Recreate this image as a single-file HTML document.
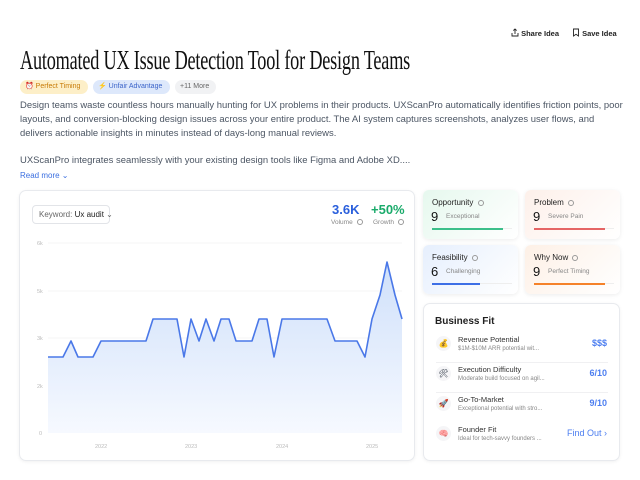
<!DOCTYPE html>
<html><head><meta charset="utf-8"><style>
*{margin:0;padding:0;box-sizing:border-box}
body{width:640px;height:480px;background:#fff;font-family:"Liberation Sans",sans-serif;color:#1f2937;position:relative;overflow:hidden}
.a{position:absolute;white-space:nowrap}
.title{left:20px;top:45px;font-family:"Liberation Serif",serif;font-size:27px;color:#111;transform:scaleX(0.675);transform-origin:left top;letter-spacing:-0.3px}
.tag{top:80px;height:14px;border-radius:7px;font-size:7px;line-height:14px;padding:0 5px;overflow:hidden}
.p{left:20px;font-size:9.45px;color:#4b5563;line-height:14px}
.card{position:absolute;border:1px solid #e8eaee;border-radius:7px;box-shadow:0 1px 3px rgba(0,0,0,.06)}
.mc{position:absolute;width:95px;height:49px;border-radius:6px;box-shadow:0 1px 4px rgba(0,0,0,.08)}
.mc .l{position:absolute;left:9px;top:8px;font-size:8px;color:#222}
.mc .n{position:absolute;left:8px;top:19px;font-size:13px;color:#111}
.mc .s{position:absolute;left:23px;top:23px;font-size:6.5px;color:#888}
.mc .bar{position:absolute;left:9px;top:38px;width:80px;height:1px;background:#eee}
.mc .bar i{display:block;height:2px;margin-top:-0.5px}
.q{display:inline-block;width:6px;height:6px;border:0.8px solid #999;border-radius:50%;vertical-align:middle;margin-left:2px}
.row .ic{position:absolute;left:12px;width:15px;height:15px;border-radius:50%;background:#f5f5f7;font-size:8px;text-align:center;line-height:15px}
.rt{position:absolute;left:34px;font-size:7.5px;color:#333}
.rs{position:absolute;left:34px;font-size:6px;color:#888}
.rv{position:absolute;right:12px;font-size:9px;color:#4c7ef0;font-weight:bold}
</style></head><body>
<div class="a" style="left:511px;top:28px;font-size:7.5px;font-weight:bold;color:#222">
<svg width="8" height="9" viewBox="0 0 8 9" style="vertical-align:-1px"><path d="M4 6V1M2.3 2.6L4 1l1.7 1.6M1 5v3h6V5" fill="none" stroke="#222" stroke-width="0.9"/></svg> Share Idea</div>
<div class="a" style="left:572px;top:28px;font-size:7.5px;font-weight:bold;color:#222">
<svg width="8" height="9" viewBox="0 0 8 9" style="vertical-align:-1px"><path d="M1.5 1h5v7L4 6.3 1.5 8z" fill="none" stroke="#222" stroke-width="0.9"/></svg> Save Idea</div>
<div class="a title">Automated UX Issue Detection Tool for Design Teams</div>
<div class="a tag" style="left:20px;width:68px;background:#fdefc8;color:#c77a06">⏰ Perfect Timing</div>
<div class="a tag" style="left:93px;width:77px;background:#dde8fb;color:#3b64c9">⚡ Unfair Advantage</div>
<div class="a tag" style="left:175px;width:41px;background:#f1f2f4;color:#666">+11 More</div>
<div class="a p" style="top:99px;white-space:normal;width:605px">Design teams waste countless hours manually hunting for UX problems in their products. UXScanPro automatically identifies friction points, poor layouts, and conversion-blocking design issues across your entire product. The AI system captures screenshots, analyzes user flows, and delivers actionable insights in minutes instead of days-long manual reviews.</div>
<div class="a p" style="top:154px">UXScanPro integrates seamlessly with your existing design tools like Figma and Adobe XD....</div>
<div class="a" style="left:20px;top:171px;font-size:8px;color:#3b6fe0">Read more ⌄</div>

<div class="card" style="left:19px;top:190px;width:396px;height:271px"></div>
<div class="a" style="left:32px;top:205px;width:78px;height:19px;border:1px solid #e2e4e8;border-radius:4px;font-size:8px;line-height:17px;padding-left:6px;color:#666">Keyword: <b style="color:#222;font-weight:normal">Ux audit</b> ⌄</div>
<div class="a" style="left:332px;top:202px;font-size:13px;font-weight:bold;color:#2a5fdc">3.6K</div>
<div class="a" style="left:371px;top:202px;font-size:13px;font-weight:bold;color:#1aab6b">+50%</div>
<div class="a" style="left:331px;top:219px;font-size:6.5px;color:#888">Volume <span class="q"></span></div>
<div class="a" style="left:373px;top:219px;font-size:6.5px;color:#888">Growth <span class="q"></span></div>
<svg class="a" style="left:0;top:0" width="640" height="480">
<defs><linearGradient id="g" x1="0" y1="0" x2="0" y2="1"><stop offset="0" stop-color="#cfe0fa"/><stop offset="1" stop-color="#f6f9ff"/></linearGradient></defs>
<g stroke="#f0f1f3" stroke-width="0.7"><line x1="48" y1="243" x2="402" y2="243"/><line x1="48" y1="291" x2="402" y2="291"/><line x1="48" y1="338" x2="402" y2="338"/><line x1="48" y1="386" x2="402" y2="386"/></g>
<g font-size="5.5" fill="#bbb" font-family="Liberation Sans"><text x="37" y="245">6k</text><text x="37" y="293">5k</text><text x="37" y="340">3k</text><text x="37" y="388">2k</text><text x="39" y="435">0</text>
<text x="95" y="448">2022</text><text x="185" y="448">2023</text><text x="276" y="448">2024</text><text x="366" y="448">2025</text></g>
<path d="M48 357L63 357L71 341L78 357L93 357L101 341L146 341L153 319L177 319L184 357L191 319L199 341L206 319L214 341L221 319L229 319L236 341L252 341L259 319L267 319L274 357L282 319L327 319L335 341L357 341L365 357L372 319L380 295L387 262L395 295L402 319L402 433L48 433Z" fill="url(#g)"/>
<path d="M48 357L63 357L71 341L78 357L93 357L101 341L146 341L153 319L177 319L184 357L191 319L199 341L206 319L214 341L221 319L229 319L236 341L252 341L259 319L267 319L274 357L282 319L327 319L335 341L357 341L365 357L372 319L380 295L387 262L395 295L402 319" fill="none" stroke="#4a78e8" stroke-width="1.6" stroke-linejoin="round"/>
</svg>

<div class="mc" style="left:423px;top:190px;background:linear-gradient(135deg,#e6f8ee,#fff)"><div class="l">Opportunity <span class="q"></span></div><div class="n">9</div><div class="s">Exceptional</div><div class="bar"><i style="width:71px;background:#3cbf8a"></i></div></div>
<div class="mc" style="left:525px;top:190px;background:linear-gradient(135deg,#fdf0ea,#fff)"><div class="l">Problem <span class="q"></span></div><div class="n">9</div><div class="s">Severe Pain</div><div class="bar"><i style="width:71px;background:#e56565"></i></div></div>
<div class="mc" style="left:423px;top:245px;background:linear-gradient(135deg,#e6effd,#fff)"><div class="l">Feasibility <span class="q"></span></div><div class="n">6</div><div class="s">Challenging</div><div class="bar"><i style="width:48px;background:#3d6fe6"></i></div></div>
<div class="mc" style="left:525px;top:245px;background:linear-gradient(135deg,#fdf0e6,#fff)"><div class="l">Why Now <span class="q"></span></div><div class="n">9</div><div class="s">Perfect Timing</div><div class="bar"><i style="width:71px;background:#f5822a"></i></div></div>

<div class="card" style="left:423px;top:303px;width:197px;height:158px">
<div class="a" style="left:11px;top:12px;font-size:10px;font-weight:bold;color:#222">Business Fit</div>
<div class="row">
<div class="ic" style="top:32px">💰</div><div class="rt" style="top:31px">Revenue Potential</div><div class="rs" style="top:42px">$1M-$10M ARR potential wit...</div><div class="rv" style="top:34px">$$$</div>
<div class="a" style="left:12px;top:58px;width:172px;height:1px;background:#f0f0f2"></div>
<div class="ic" style="top:62px">🛠</div><div class="rt" style="top:61px">Execution Difficulty</div><div class="rs" style="top:72px">Moderate build focused on agil...</div><div class="rv" style="top:64px">6/10</div>
<div class="a" style="left:12px;top:88px;width:172px;height:1px;background:#f0f0f2"></div>
<div class="ic" style="top:92px">🚀</div><div class="rt" style="top:91px">Go-To-Market</div><div class="rs" style="top:102px">Exceptional potential with stro...</div><div class="rv" style="top:94px">9/10</div>
<div class="ic" style="top:122px">🧠</div><div class="rt" style="top:121px">Founder Fit</div><div class="rs" style="top:132px">Ideal for tech-savvy founders ...</div><div class="rv" style="top:124px;font-weight:normal">Find Out ›</div>
</div></div>
</body></html>
